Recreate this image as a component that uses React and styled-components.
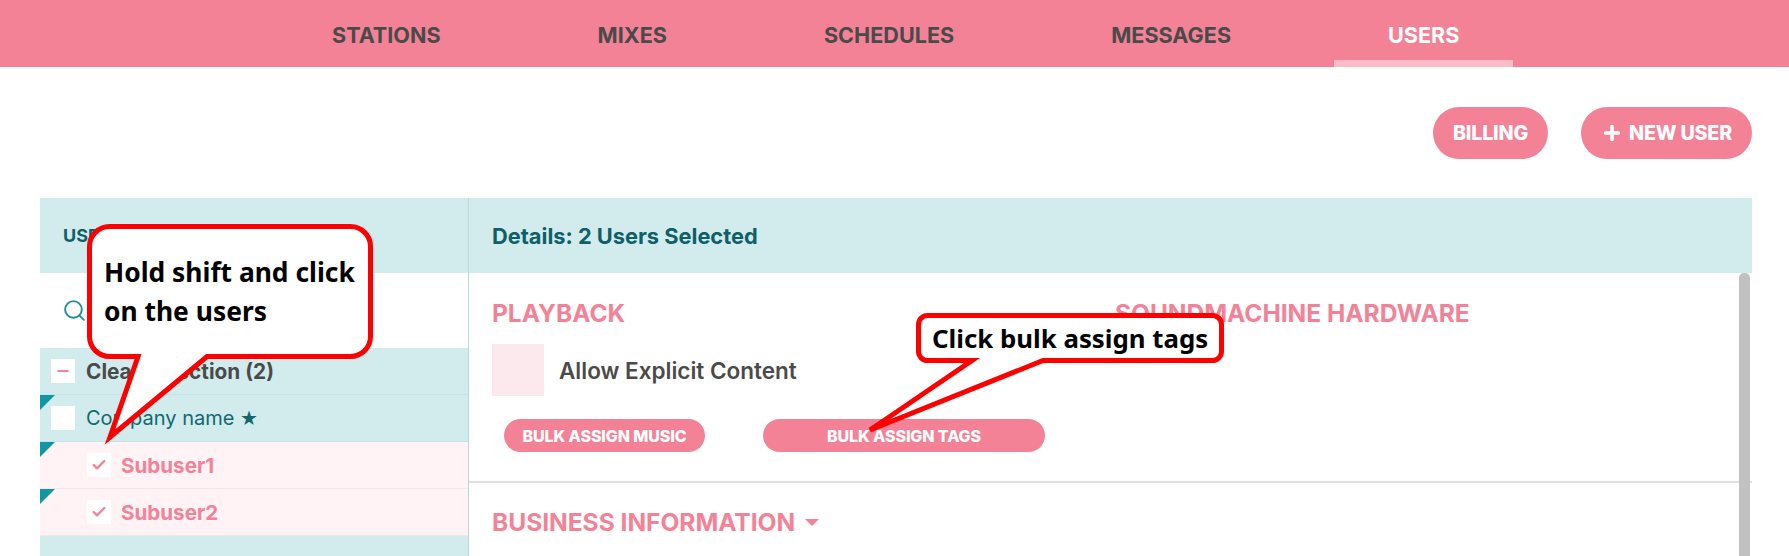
import React from 'react'
import styled, {createGlobalStyle} from 'styled-components'
import {Search, Plus, Check, Minus} from 'lucide-react'

const GlobalStyle = createGlobalStyle`
    html, body {
        margin: 0;
        padding: 0;
        background: #fff;
    }
    body {
        font-family: "Inter", "Liberation Sans", sans-serif;
    }
`

const navItems = ['STATIONS', 'MIXES', 'SCHEDULES', 'MESSAGES', 'USERS']

function App() {
    return (
        <Page>
            <GlobalStyle />
            <Nav>
                {navItems.map((item) => (
                    <NavTab key={item} $active={item === 'USERS'}>{item}</NavTab>
                ))}
            </Nav>
            <Toolbar>
                <PillButton>BILLING</PillButton>
                <PillButton><Plus size={22} strokeWidth={4} />NEW USER</PillButton>
            </Toolbar>
            <Panels>
                <UsersPanel>
                    <PanelHeader>
                        <HeaderTitle>USERS</HeaderTitle>
                    </PanelHeader>
                    <SearchRow>
                        <Search size={25} strokeWidth={1.8} color="#1f8e93" />
                    </SearchRow>
                    <TreeRow>
                        <Box><Minus size={16} strokeWidth={3} color="#f48296" /></Box>
                        <ClearLabel>Clear Selection (2)</ClearLabel>
                    </TreeRow>
                    <TreeRow $flag>
                        <Box />
                        <CompanyLabel>Company name <StarGlyph>★</StarGlyph></CompanyLabel>
                    </TreeRow>
                    <TreeRow $flag $sub>
                        <Box><Check size={16} strokeWidth={3.5} color="#f48296" /></Box>
                        <SubLabel>Subuser1</SubLabel>
                    </TreeRow>
                    <TreeRow $flag $sub>
                        <Box><Check size={16} strokeWidth={3.5} color="#f48296" /></Box>
                        <SubLabel>Subuser2</SubLabel>
                    </TreeRow>
                </UsersPanel>
                <DetailsPanel>
                    <PanelHeader>
                        <DetailsTitle>Details: 2 Users Selected</DetailsTitle>
                    </PanelHeader>
                    <DetailsBody>
                        <Section>
                            <Columns>
                                <div>
                                    <SectionTitle>PLAYBACK</SectionTitle>
                                    <OptionRow>
                                        <OptionBox />
                                        <OptionLabel>Allow Explicit Content</OptionLabel>
                                    </OptionRow>
                                </div>
                                <SectionTitle>SOUNDMACHINE HARDWARE</SectionTitle>
                            </Columns>
                            <BulkRow>
                                <BulkButton $width={201}>BULK ASSIGN MUSIC</BulkButton>
                                <BulkButton $width={282}>BULK ASSIGN TAGS</BulkButton>
                            </BulkRow>
                        </Section>
                        <BusinessSection>
                            <SectionTitle>BUSINESS INFORMATION</SectionTitle>
                            <Caret />
                        </BusinessSection>
                        <Scrollbar />
                    </DetailsBody>
                </DetailsPanel>
            </Panels>

            <Callout $left={80} $top={220} $width={300} $height={230}>
                <svg width="300" height="230" viewBox="0 0 300 230">
                    <CalloutPath d="M29.5 6.5 H270.5 A20 20 0 0 1 290.5 26.5 V116.5 A20 20 0 0 1 270.5 136.5 H127 L30 217 L58 136.5 H29.5 A20 20 0 0 1 9.5 116.5 V26.5 A20 20 0 0 1 29.5 6.5 Z" />
                </svg>
                <CalloutText $left={24} $top={33} $lineHeight={39} $size={26.4}>
                    Hold shift and click<br />on the users
                </CalloutText>
            </Callout>
            <Callout $left={860} $top={305} $width={370} $height={135}>
                <svg width="370" height="135" viewBox="0 0 370 135">
                    <CalloutPath d="M67.5 10.5 H352.5 A9 9 0 0 1 361.5 19.5 V46.5 A9 9 0 0 1 352.5 55.5 H183 L10 125 L112 55.5 H67.5 A9 9 0 0 1 58.5 46.5 V19.5 A9 9 0 0 1 67.5 10.5 Z" />
                </svg>
                <CalloutText $left={72} $top={14} $lineHeight={38} $size={25.8}>
                    Click bulk assign tags
                </CalloutText>
            </Callout>
        </Page>
    )
}

const Page = styled.div`
    position: relative;
    width: 1789px;
    height: 556px;
    overflow: hidden;
    background: #fff;
`

const Nav = styled.nav`
    display: flex;
    gap: 49px;
    height: 67px;
    padding-left: 278px;
    background: #f48296;
    box-sizing: border-box;
`

const NavTab = styled.div`
    display: flex;
    align-items: flex-start;
    padding: 23px 54px 0;
    font-size: 21.6px;
    line-height: 25px;
    font-weight: 700;
    color: ${(props) => (props.$active ? '#fff' : '#4a4a4a')};
    border-bottom: 7px solid ${(props) => (props.$active ? '#fbbcc8' : 'transparent')};
`

const Toolbar = styled.div`
    display: flex;
    justify-content: flex-end;
    gap: 33px;
    padding: 40px 37px 0 0;
`

const PillButton = styled.div`
    display: flex;
    align-items: center;
    gap: 6px;
    height: 52px;
    padding: 0 20px;
    border-radius: 26px;
    background: #f48296;
    color: #fff;
    font-size: 19.7px;
    font-weight: 800;
    letter-spacing: -0.2px;
`

const Panels = styled.div`
    display: flex;
    margin: 39px 37px 0 40px;
`

const UsersPanel = styled.section`
    width: 428px;
    height: 360px;
    background: #d2ecee;
    flex-shrink: 0;
`

const DetailsPanel = styled.section`
    flex: 1;
    border-left: 1px solid #b9d8da;
`

const PanelHeader = styled.header`
    display: flex;
    align-items: center;
    height: 75px;
    padding-left: 23px;
    background: #d2ecee;
`

const HeaderTitle = styled.h3`
    margin: 0;
    font-size: 18px;
    font-weight: 700;
    color: #0f5f68;
`

const DetailsTitle = styled(HeaderTitle)`
    font-size: 21.8px;
    line-height: 27px;
    margin-top: 2px;
`

const SearchRow = styled.div`
    display: flex;
    align-items: center;
    height: 75px;
    padding-left: 22px;
    background: #fff;
`

const TreeRow = styled.div`
    position: relative;
    display: flex;
    align-items: center;
    gap: ${(props) => (props.$sub ? '10px' : '11px')};
    height: 47px;
    padding-left: ${(props) => (props.$sub ? '47px' : '11px')};
    box-sizing: border-box;
    background: ${(props) => (props.$sub ? '#fff3f5' : 'transparent')};
    border-bottom: 1px solid ${(props) => (props.$sub ? '#f6e6e8' : '#c6e3e6')};

    &::before {
        content: ${(props) => (props.$flag ? "''" : 'none')};
        position: absolute;
        left: 0;
        top: 0;
        border-style: solid;
        border-width: 15px 15px 0 0;
        border-color: #0f97a3 transparent transparent transparent;
    }
`

const Box = styled.span`
    display: flex;
    align-items: center;
    justify-content: center;
    width: 24px;
    height: 24px;
    background: #fff;
`

const ClearLabel = styled.span`
    font-size: 20.8px;
    font-weight: 700;
    color: #4a4a4a;
`

const CompanyLabel = styled.span`
    font-size: 20px;
    color: #11686f;
`

const StarGlyph = styled.span`
    font-family: "DejaVu Sans", sans-serif;
    font-size: 20px;
`

const SubLabel = styled.span`
    font-size: 20.6px;
    font-weight: 700;
    color: #f48296;
`

const DetailsBody = styled.div`
    position: relative;
    background: #fff;
`

const Section = styled.div`
    height: 210px;
    box-sizing: border-box;
    padding: 26px 0 0 23px;
    border-bottom: 2px solid #e3dfdf;
`

const Columns = styled.div`
    display: grid;
    grid-template-columns: 623px 1fr;
`

const SectionTitle = styled.h4`
    margin: 0;
    font-size: 24.5px;
    line-height: 29px;
    font-weight: 700;
    color: #f48296;
`

const OptionRow = styled.div`
    display: flex;
    align-items: center;
    gap: 15px;
    margin-top: 16px;
`

const OptionBox = styled.span`
    width: 52px;
    height: 52px;
    background: #fce9ed;
`

const OptionLabel = styled.span`
    font-size: 22.5px;
    font-weight: 600;
    color: #4a4a4a;
`

const BulkRow = styled.div`
    display: flex;
    gap: 58px;
    margin: 23px 0 0 12px;
`

const BulkButton = styled.div`
    display: flex;
    align-items: center;
    justify-content: center;
    width: ${(props) => props.$width}px;
    height: 33px;
    border-radius: 17px;
    background: #f48296;
    color: #fff;
    font-size: 16px;
    font-weight: 800;
    letter-spacing: -0.1px;
`

const BusinessSection = styled.div`
    display: flex;
    align-items: center;
    gap: 10px;
    padding: 25px 0 0 23px;
`

const Caret = styled.span`
    border-style: solid;
    border-width: 7px 7px 0 7px;
    border-color: #f48296 transparent transparent transparent;
`

const Scrollbar = styled.div`
    position: absolute;
    top: 0;
    right: 2px;
    width: 11px;
    height: 300px;
    border-radius: 5px 5px 0 0;
    background: #c1c1c1;
`

const Callout = styled.div`
    position: absolute;
    left: ${(props) => props.$left}px;
    top: ${(props) => props.$top}px;
    width: ${(props) => props.$width}px;
    height: ${(props) => props.$height}px;
`

const CalloutPath = styled.path`
    fill: #fff;
    stroke: #fe0000;
    stroke-width: 5;
    stroke-linejoin: miter;
`

const CalloutText = styled.div`
    position: absolute;
    left: ${(props) => props.$left}px;
    top: ${(props) => props.$top}px;
    font-family: "Noto Sans", "Open Sans", sans-serif;
    font-size: ${(props) => props.$size}px;
    line-height: ${(props) => props.$lineHeight}px;
    font-weight: 700;
    white-space: nowrap;
    color: #000;
`

export default App
